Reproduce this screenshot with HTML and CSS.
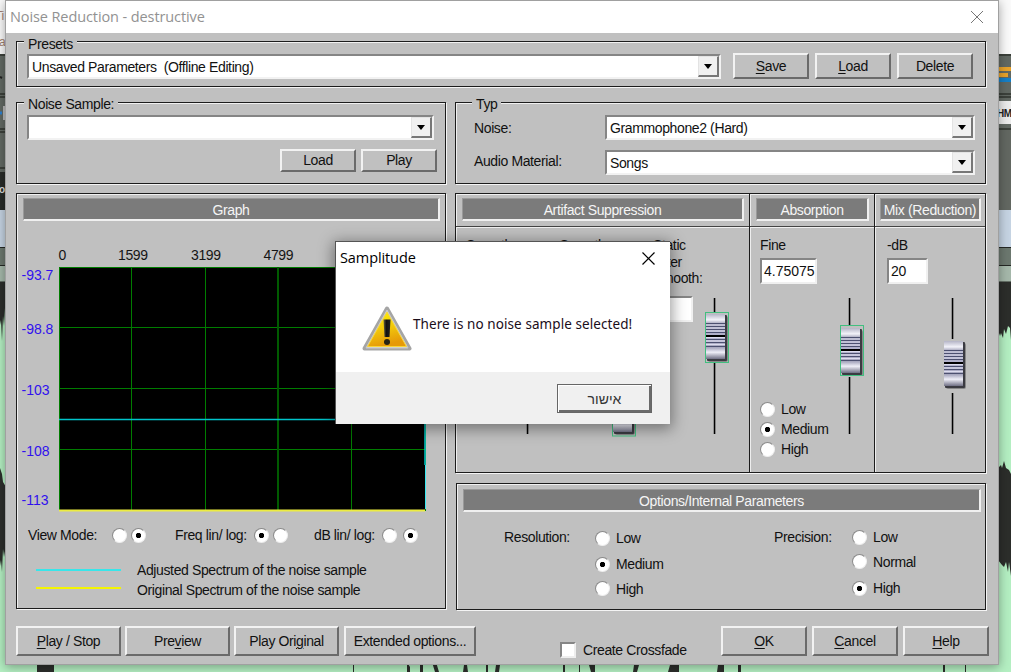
FILE: index.html
```html
<!DOCTYPE html>
<html lang="en">
<head>
    <meta charset="UTF-8">
    <title>Noise Reduction - destructive</title>
    <link rel="stylesheet" href="styles.css">
</head>
<body>
    <!-- Editor behind the windows -->
    <svg class="desktop" width="1011" height="672" viewBox="0 0 1011 672">
        <rect width="1011" height="672" fill="#b4efc2"/>
        <rect width="1011" height="54" fill="#fafafa"/>
        <rect y="54" width="1011" height="118" fill="#626963"/>
        <path d="M0 55H1011M0 94H1011M0 97H1011M0 129H1011M0 132H1011M0 168H6" stroke="#30352f" stroke-width="1.5"/>
        <rect y="172" width="6" height="38" fill="#282b28"/>
        <rect x="990" y="130" width="21" height="80" fill="#636862"/>
        <rect y="210" width="1011" height="37" fill="#c6d4e3"/>
        <rect y="248" width="1011" height="17" fill="#6c786f"/>
        <rect y="266" width="1011" height="16" fill="#a5b8aa"/>
        <path d="M0 247.500H1011M0 265.500H1011M0 282H1011" stroke="#252825"/>
        <path d="M0 282H6V318L5 308 4 326 3 316 2 341 1 320 0 325Z" fill="#2c2e2b"/>
        <path d="M0 468L2 474 3 482 6 487V545L4 557 3 549 2 572 1 560 0 566Z" fill="#2c2e2b"/>
        <path d="M998 282H1011V340L1010 328 1008 326 1006 334 1004 329 1003 338 1001 333 1000 336 998 330Z" fill="#2c2e2b"/>
        <path d="M998 468L1001 465 1002 468 1004 461 1006 468 1009 470 1011 474V576L1009 562 1008 572 1006 562 1004 567 1002 565 998 560Z" fill="#2c2e2b"/>
        <rect x="998" y="67" width="13" height="4" fill="#e9a32b"/>
        <rect x="998" y="73" width="10" height="4" fill="#e9a32b"/>
        <rect x="998" y="78" width="13" height="4" fill="#167fc6"/>
        <rect x="998" y="101" width="13" height="23" fill="#ececec"/>
        <text x="997" y="117" class="desk-text">HM</text>
        <path d="M0 77l2 1" stroke="#222" stroke-width="2"/>
        <path d="M4 106v14" stroke="#bbb" stroke-width="2"/>
        <path d="M0 113h2" stroke="#2a7fd0" stroke-width="3"/>
        <text x="-5" y="20" class="desk-text dim">Ti</text>
        <text x="-1" y="46" class="desk-text dim">a</text>
        <text x="-1" y="193" class="desk-text light">o</text>
        <g fill="#2c2e2b">
            <path d="M37 662h17v10H37zM353 662h1v10h-1zM407 662l3 5v5h-3zM420 662h3v10h-3zM432 662h4l3 10h-4zM464 665h3l1 7h-5zM486 665h2v7h-2zM496 665h4l-1 7h-4zM563 665h2v7h-2zM579 665h1v7h-1zM589 665h6v7h-4zM634 665h5l-2 7h-4zM670 665h9v7h-11zM718 665h6v7h-7zM738 665h3v7h-3zM943 665h2v7h-2zM965 665h1v7h-1z"/>
        </g>
    </svg>

    <div class="window">
        <div class="titlebar">
            <span>Noise Reduction - destructive</span>
            <svg width="12" height="12" viewBox="0 0 12 12"><path d="M0 0L12 12M12 0L0 12" stroke="#777"/></svg>
        </div>

        <div class="content">
            <div class="box presets">
                <span class="legend">Presets</span>
                <div class="combo"><span>Unsaved Parameters&nbsp; (Offline Editing)</span><i></i></div>
                <button class="small"><u>S</u>ave</button>
                <button class="small"><u>L</u>oad</button>
                <button class="small">Delete</button>
            </div>

            <div class="row groups">
                <div class="box sample">
                    <span class="legend">Noise Sample:</span>
                    <div class="combo"><span></span><i></i></div>
                    <div class="sample-buttons">
                        <button class="small">Load</button>
                        <button class="small">Play</button>
                    </div>
                </div>
                <div class="box typ">
                    <span class="legend">Typ</span>
                    <label>Noise:</label>
                    <div class="combo"><span>Grammophone2 (Hard)</span><i></i></div>
                    <label>Audio Material:</label>
                    <div class="combo"><span>Songs</span><i></i></div>
                </div>
            </div>

            <div class="row main">
                <div class="box graph">
                    <div class="header">Graph</div>
                    <svg class="plot" width="412" height="275" viewBox="17 240 412 275">
                        <rect x="59" y="267" width="367" height="244" fill="#000"/>
                        <path d="M59.500 267V511M131.500 267V511M205.500 267V511M351.500 267V511M425.500 267V511M59 267.500H426M59 327.500H426M59 388.500H426M59 449.500H426" stroke="#007c00" fill="none"/>
                        <path d="M278 267V511" stroke="#005a00" stroke-width="2"/>
                        <path d="M59 419.500H425V465" stroke="#00c4ca" stroke-width="1.500" fill="none"/>
                        <path d="M425.500 465V509" stroke="#38e8f0"/>
                        <path d="M59 510.500H425" stroke="#ecec42" stroke-width="2"/>
                        <g class="freq">
                            <text x="58.500" y="260">0</text>
                            <text x="118" y="260">1599</text>
                            <text x="191" y="260">3199</text>
                            <text x="263.500" y="260">4799</text>
                        </g>
                        <g class="db">
                            <text x="21.500" y="280">-93.7</text>
                            <text x="21.500" y="334">-98.8</text>
                            <text x="21.500" y="395">-103</text>
                            <text x="21.500" y="456">-108</text>
                            <text x="21.500" y="505">-113</text>
                        </g>
                    </svg>
                    <div class="modes">
                        <span class="m1">View Mode:</span><b class="radio"></b><b class="radio on"></b>
                        <span class="m2">Freq lin/ log:</span><b class="radio on"></b><b class="radio"></b>
                        <span class="m3">dB lin/ log:</span><b class="radio"></b><b class="radio on last"></b>
                    </div>
                    <div class="key"><i class="cyan"></i>Adjusted Spectrum of the noise sample</div>
                    <div class="key"><i class="yellow"></i>Original Spectrum of the noise sample</div>
                </div>

                <div class="right">
                    <div class="box faders">
                        <div class="section artifact">
                            <div class="head"><div class="header">Artifact Suppression</div></div>
                            <div class="columns">
                                <div class="column">
                                    <p>Smooth<br>Time:</p>
                                    <div class="fader-row"><div class="field">5</div>
                                        <svg class="fader" width="24" height="137" viewBox="0 0 24 137"><path class="groove" d="M9.500 0V136"/><path class="groove-light" d="M10.500 0V136"/></svg>
                                    </div>
                                </div>
                                <div class="column">
                                    <p>Smooth<br>Freq:</p>
                                    <div class="fader-row"><div class="field">5</div>
                                        <svg class="fader" width="24" height="137" viewBox="0 0 24 137"><path class="groove" d="M10.500 0V86"/><use href="#thumb" y="87"/><rect class="focus" x=".5" y="87" width="23" height="51"/></svg>
                                    </div>
                                </div>
                                <div class="column">
                                    <p>Static<br>Filter<br>Smooth:</p>
                                    <div class="fader-row"><div class="field">5</div>
                                        <svg class="fader" width="24" height="137" viewBox="0 0 24 137"><path class="groove" d="M9.500 0V136"/><path class="groove-light" d="M10.500 0V136"/><use href="#thumb" y="14"/><rect class="focus" x=".5" y="14.500" width="23" height="50"/></svg>
                                    </div>
                                </div>
                            </div>
                        </div>
                        <div class="section absorption">
                            <div class="head"><div class="header">Absorption</div></div>
                            <div class="body">
                                <p>Fine</p>
                                <div class="field">4.75075</div>
                                <div class="fader-row">
                                    <div class="radios">
                                        <label><b class="radio"></b>Low</label>
                                        <label><b class="radio on"></b>Medium</label>
                                        <label><b class="radio"></b>High</label>
                                    </div>
                                    <svg class="fader" width="24" height="137" viewBox="0 0 24 137"><path class="groove" d="M9.500 0V136"/><path class="groove-light" d="M10.500 0V136"/><use href="#thumb" y="28"/><rect class="focus" x=".5" y="27.500" width="23" height="50"/></svg>
                                </div>
                            </div>
                        </div>
                        <div class="section mix">
                            <div class="head"><div class="header">Mix (Reduction)</div></div>
                            <div class="body">
                                <p>-dB</p>
                                <div class="field">20</div>
                                <div class="fader-row">
                                    <svg class="fader" width="24" height="137" viewBox="0 0 24 137"><path class="groove" d="M9.500 0V41M9.500 95V136"/><path class="groove-light" d="M10.500 0V41M10.500 95V136"/><use href="#thumb" y="41"/></svg>
                                </div>
                            </div>
                        </div>
                    </div>

                    <div class="box options">
                        <div class="header">Options/Internal Parameters</div>
                        <div class="option-row">
                            <span class="option-name">Resolution:</span>
                            <div class="radios resolution">
                                <label><b class="radio"></b>Low</label>
                                <label><b class="radio on"></b>Medium</label>
                                <label><b class="radio"></b>High</label>
                            </div>
                            <span class="option-name">Precision:</span>
                            <div class="radios precision">
                                <label><b class="radio"></b>Low</label>
                                <label><b class="radio"></b>Normal</label>
                                <label><b class="radio on"></b>High</label>
                            </div>
                        </div>
                    </div>
                </div>
            </div>

            <div class="row actions">
                <button class="wide"><u>P</u>lay / Stop</button>
                <button class="wide">Pre<u>v</u>iew</button>
                <button class="wide">Play Ori<u>g</u>inal</button>
                <button class="extended">Extended options...</button>
                <label class="crossfade"><b class="check"></b>Create Crossfade</label>
                <button class="medium"><u>O</u>K</button>
                <button class="medium"><u>C</u>ancel</button>
                <button class="medium"><u>H</u>elp</button>
            </div>
        </div>
    </div>

    <div class="dialog">
        <div class="dialog-title">
            <span>Samplitude</span>
            <svg width="13" height="13" viewBox="0 0 13 13"><path d="M.5 .5L12.500 12.500M12.500 .5L.5 12.500" stroke="#000" stroke-width="1.200"/></svg>
        </div>
        <div class="dialog-body">
            <svg width="50" height="46" viewBox="0 0 50 46">
                <defs>
                    <linearGradient id="warn" x1="0" y1="0" x2=".3" y2="1">
                        <stop offset="0" stop-color="#fff600"/>
                        <stop offset=".5" stop-color="#f3cd0c"/>
                        <stop offset="1" stop-color="#e69a08"/>
                    </linearGradient>
                    <linearGradient id="bang" x1="0" x2="1">
                        <stop offset="0" stop-color="#6b6646"/>
                        <stop offset=".4" stop-color="#111"/>
                        <stop offset="1" stop-color="#222"/>
                    </linearGradient>
                </defs>
                <path d="M25 2.500L47.500 42.500H2.500Z" fill="#b0b0b0" stroke="#a5a5a5" stroke-width="4" stroke-linejoin="round"/>
                <path d="M25 4L46 42H4Z" fill="#d8d8d8" stroke="#c9c9c9" stroke-linejoin="round"/>
                <path d="M25 6L44.500 40.500H5.500Z" fill="url(#warn)" stroke="#f7d63a" stroke-linejoin="round"/>
                <path d="M21.500 13.500H28.500L27.500 31H22.500Z" fill="url(#bang)"/>
                <circle cx="25" cy="36" r="3" fill="#262417"/>
            </svg>
            <span>There is no noise sample selected!</span>
        </div>
        <div class="dialog-footer"><button lang="he">אישור</button></div>
    </div>

    <!-- Shared fader cap -->
    <svg class="defs" width="0" height="0">
        <defs>
            <linearGradient id="metal" x1="0" y1="0" x2="0" y2="1">
                <stop offset="0" stop-color="#b4b4c6"/>
                <stop offset=".13" stop-color="#f3f3fa"/>
                <stop offset=".22" stop-color="#9c9cb4"/>
                <stop offset=".5" stop-color="#b5b5d0"/>
                <stop offset=".75" stop-color="#a8a8bf"/>
                <stop offset=".85" stop-color="#efeff8"/>
                <stop offset="1" stop-color="#6f6f84"/>
            </linearGradient>
            <g id="thumb">
                <rect width="24" height="51" fill="#c0c0c0"/>
                <rect x="3" y="4" width="20" height="46" rx="2" fill="#888"/>
                <rect x="2" y="3" width="20" height="46" rx="1" fill="#3b3b42"/>
                <rect x="1" y="2" width="19" height="45" fill="url(#metal)"/>
                <path d="M1 11.500H20M1 14.500H20M1 17.500H20M1 20.500H20M1 27.500H20M1 30.500H20M1 34.500H20" stroke="#4c5070"/>
                <path d="M1 13H20M1 16H20M1 19H20M1 25.500H20M1 29H20M1 32.500H20" stroke="#dcdcee"/>
                <path d="M1 24H20" stroke="#000" stroke-width="2"/>
            </g>
        </defs>
    </svg>
</body>
</html>
```
FILE: styles.css
```css
* {
    box-sizing: border-box;
    margin: 0;
    padding: 0;
}

body {
    width: 1011px;
    height: 672px;
    position: relative;
    overflow: hidden;
    font-family: "Liberation Sans", Arial, sans-serif;
    font-size: 14px;
    line-height: 16px;
    letter-spacing: -0.38px;
    color: #111;
}

.desktop {
    position: absolute;
    left: 0;
    top: 0;
}

.desk-text {
    font-size: 10px;
    font-weight: bold;
    fill: #222;
}

.dim {
    font-size: 12px;
    font-weight: normal;
    fill: #a08070;
}

.light {
    fill: #ddd;
}

.defs {
    position: absolute;
}

.window {
    position: absolute;
    left: 5px;
    top: 0;
    width: 994px;
    height: 665px;
    background: #c0c0c0;
    border: 1px solid #a0a0a0;
    box-shadow: 0 2px 10px rgba(0, 0, 0, 0.35);
}

.titlebar {
    height: 32px;
    background: #fff;
    display: flex;
    justify-content: space-between;
    align-items: center;
    padding: 0 15px 0 4px;
    font-family: "Open Sans", sans-serif;
    font-size: 14.5px;
    letter-spacing: -0.1px;
    color: #929292;
}

.content {
    padding: 8px 10px 0;
}

.row {
    display: flex;
}

/* Etched frame */
.box {
    position: relative;
    border: 1px solid #1c1c1c;
    box-shadow: 1px 1px 0 #f4f4f4, inset 1px 1px 0 #f0f0f0;
}

.legend {
    position: absolute;
    left: 7px;
    top: -6px;
    padding: 0 4px;
    background: #c0c0c0;
}

.groups .legend {
    top: -7px;
}

.combo {
    height: 25px;
    display: flex;
    background: #fff;
    border: 2px solid #858585;
    border-right-color: #f2f2f2;
    border-bottom-color: #f2f2f2;
}

.combo span {
    flex: 1;
    padding-left: 3px;
    line-height: 22px;
}

.combo i {
    width: 21px;
    height: 21px;
    background: #f0f0f0;
    border: 1px solid #e3e3e3;
    border-right: 2px solid #777;
    border-bottom: 2px solid #777;
    display: flex;
    align-items: center;
    justify-content: center;
}

.combo i::after {
    content: "";
    border: 4.5px solid transparent;
    border-top: 5px solid #000;
    border-bottom: 0;
}

button {
    font: inherit;
    letter-spacing: inherit;
    color: inherit;
    background: #c0c0c0;
    border: 2px solid #f2f2f2;
    border-right-color: #6a6a6a;
    border-bottom-color: #6a6a6a;
}

u {
    text-underline-offset: 2px;
}

.small {
    width: 76px;
}

.presets {
    width: 970px;
    height: 46px;
    display: flex;
    padding: 12px 0 0 10px;
}

.presets .combo {
    width: 694px;
    margin-right: 12px;
}

.presets .small {
    height: 26px;
    margin: -1px 6px 0 0;
    padding-bottom: 1px;
}

.groups {
    margin-top: 15px;
    gap: 9px;
}

.sample {
    width: 430px;
    height: 82px;
    padding: 12px 8px 0 10px;
}

.sample .combo {
    width: 407px;
}

.sample-buttons {
    display: flex;
    justify-content: flex-end;
    gap: 5px;
    margin-top: 9px;
}

.sample-buttons .small {
    height: 23px;
    padding-bottom: 1px;
}

.typ {
    width: 531px;
    height: 82px;
    display: grid;
    grid-template-columns: 131px 370px;
    grid-template-rows: 25px 25px;
    row-gap: 10px;
    padding: 12px 0 0 18px;
}

.typ .legend {
    left: 16px;
}

.typ label {
    line-height: 27px;
}

.typ label:nth-of-type(2) {
    line-height: 22px;
}

.main {
    margin-top: 9px;
    gap: 9px;
}

.header {
    height: 23px;
    background: #7b7b7b;
    border: 1px solid #999;
    border-right: 2px solid #f0f0f0;
    border-bottom: 2px solid #f0f0f0;
    color: #f5f5f5;
    line-height: 23px;
    text-align: center;
}

.graph {
    width: 430px;
    height: 416px;
    padding: 4px 5px 0 6px;
}

.plot {
    display: block;
    margin: 19px 0 0 -6px;
}

.freq text {
    font-size: 14px;
    letter-spacing: -0.35px;
    fill: #151515;
}

.db text {
    font-size: 14px;
    letter-spacing: 0;
    fill: #3010ee;
}

.modes {
    display: flex;
    align-items: center;
    height: 16px;
    margin: 12px 0 0 5px;
}

.m1 {
    width: 84px;
}

.m2 {
    width: 79px;
    margin-left: 25px;
}

.m3 {
    width: 68px;
    margin-left: 22px;
}

.radio {
    display: block;
    width: 15px;
    height: 15px;
    margin-right: 4px;
    border-radius: 50%;
    background: #fff;
    border: 1px solid #eee;
    border-top-color: #8a8a8a;
    border-left-color: #8a8a8a;
}

.radio.last {
    margin-left: 2px;
}

.radio.on {
    background: radial-gradient(circle, #000 2.3px, #fff 3px);
}

.key {
    display: flex;
    align-items: center;
    height: 20px;
    padding-left: 13px;
}

.modes + .key {
    margin-top: 17px;
}

.key i {
    width: 85px;
    height: 2px;
    margin-right: 16px;
}

.cyan {
    background: #38e6ea;
}

.yellow {
    background: #f4f400;
    margin-bottom: 4px;
}

.faders {
    width: 531px;
    height: 280px;
    display: flex;
}

.section + .section {
    border-left: 1px solid #1c1c1c;
    box-shadow: inset 1px 0 0 #eee;
}

.head {
    height: 33px;
    padding: 4px 5px 0 6px;
    border-bottom: 1px solid #444;
    box-shadow: 0 1px 0 #f0f0f0;
}

.artifact {
    width: 293px;
}

.absorption {
    width: 125px;
}

.mix {
    width: 111px;
}

.mix .head {
    padding: 4px 4px 0 5px;
}

.absorption .body {
    padding: 10px 0 0 10px;
}

.mix .body {
    padding: 10px 0 0 12px;
}

.columns {
    display: flex;
    padding: 10px 0 0 10px;
}

.column {
    width: 93.5px;
}

.column p {
    height: 59px;
    line-height: 16.5px;
}

.body p {
    height: 21px;
}

.field {
    width: 41px;
    height: 26px;
    padding-left: 2px;
    background: #fff;
    border: 2px solid #858585;
    border-right-color: #f0f0f0;
    border-bottom-color: #f0f0f0;
    line-height: 22px;
}

.column .field {
    width: 40px;
}

.absorption .field {
    width: 57px;
    letter-spacing: 0;
}

.body .fader-row {
    margin-top: 14px;
}

.fader-row {
    display: flex;
}

.fader {
    display: block;
    overflow: visible;
}

.column .fader {
    margin: 2px 0 0 12px;
}

.mix .fader {
    margin-left: 56px;
}

.groove {
    stroke: #000;
    stroke-width: 1.5;
}

.groove-light {
    stroke: #777;
    stroke-width: 0.5;
}

.focus {
    fill: none;
    stroke: #42bf80;
}

.radios label {
    display: flex;
    align-items: center;
    height: 20px;
}

.radios .radio {
    margin-right: 6px;
}

.absorption .radios {
    width: 80px;
    padding-top: 101px;
}

.options {
    width: 530px;
    height: 127px;
    margin: 10px 0 0 1px;
    padding: 5px 4px 0 6px;
}

.option-row {
    display: flex;
    padding: 15px 0 0 41px;
}

.option-name {
    width: 91px;
    line-height: 20px;
}

.resolution {
    width: 179px;
    padding-top: 1px;
}

.resolution label:nth-child(2) {
    height: 32px;
}

.resolution label:nth-child(3) {
    height: 17px;
}

.precision {
    margin-left: -13px;
}

.precision label {
    height: 24px;
}

.precision label:first-child {
    height: 20px;
}

.precision label:nth-child(2) {
    height: 29px;
}

.actions {
    margin-top: 16px;
    align-items: flex-start;
}

.actions button {
    height: 30px;
    flex-shrink: 0;
}

.wide {
    width: 105px;
    margin-right: 4px;
}

.extended {
    width: 132px;
    margin-left: 1px;
}

.crossfade {
    display: flex;
    flex-shrink: 0;
    width: 161px;
    margin: 16px 0 0 84px;
}

.check {
    width: 16px;
    height: 16px;
    margin-right: 7px;
    background: #fff;
    border: 2px solid #858585;
    border-right-color: #eee;
    border-bottom-color: #eee;
}

.medium {
    width: 86px;
    margin-right: 5px;
}

.dialog {
    position: absolute;
    left: 335px;
    top: 241px;
    width: 335px;
    height: 183px;
    background: #fff;
    border: 1px solid #555;
    border-right: 0;
    border-bottom: 0;
    box-shadow: 0 3px 14px 2px rgba(0, 0, 0, 0.4);
}

.dialog-title {
    height: 33px;
    display: flex;
    justify-content: space-between;
    align-items: center;
    padding: 0 15px 1px 4px;
    font-family: "Open Sans", sans-serif;
    font-size: 14.5px;
    letter-spacing: -0.1px;
    color: #000;
}

.dialog-body {
    height: 97px;
    display: flex;
    align-items: center;
    padding: 10px 0 0 26px;
    font-family: "Noto Sans", sans-serif;
    font-size: 13.5px;
    letter-spacing: 0.08px;
    color: #1a0d1a;
}

.dialog-body span {
    margin: -9px 0 0 1px;
}

.dialog-footer {
    height: 52px;
    padding: 12px 18px 0 0;
    background: #f0f0f0;
    text-align: right;
}

.dialog-footer button {
    width: 95px;
    height: 29px;
    background: #f0f0f0;
    border: 1px solid #666;
    box-shadow: inset 1px 1px 0 #fff, inset -2px -2px 0 #6a6a6a;
    letter-spacing: 0;
    color: #333;
}
```
